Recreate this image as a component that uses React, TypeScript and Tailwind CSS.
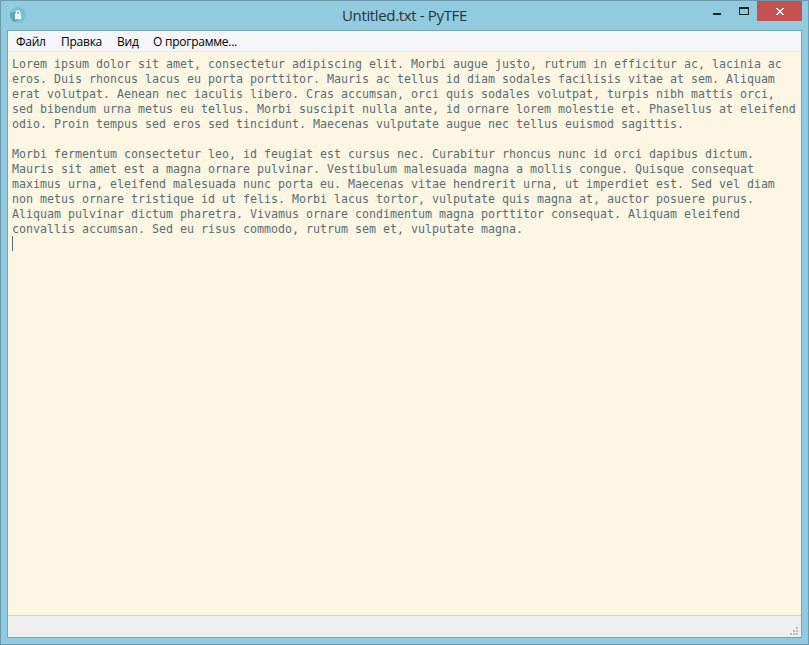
const lines = [
  'Lorem ipsum dolor sit amet, consectetur adipiscing elit. Morbi augue justo, rutrum in efficitur ac, lacinia ac',
  'eros. Duis rhoncus lacus eu porta porttitor. Mauris ac tellus id diam sodales facilisis vitae at sem. Aliquam',
  'erat volutpat. Aenean nec iaculis libero. Cras accumsan, orci quis sodales volutpat, turpis nibh mattis orci,',
  'sed bibendum urna metus eu tellus. Morbi suscipit nulla ante, id ornare lorem molestie et. Phasellus at eleifend',
  'odio. Proin tempus sed eros sed tincidunt. Maecenas vulputate augue nec tellus euismod sagittis.',
  '',
  'Morbi fermentum consectetur leo, id feugiat est cursus nec. Curabitur rhoncus nunc id orci dapibus dictum.',
  'Mauris sit amet est a magna ornare pulvinar. Vestibulum malesuada magna a mollis congue. Quisque consequat',
  'maximus urna, eleifend malesuada nunc porta eu. Maecenas vitae hendrerit urna, ut imperdiet est. Sed vel diam',
  'non metus ornare tristique id ut felis. Morbi lacus tortor, vulputate quis magna at, auctor posuere purus.',
  'Aliquam pulvinar dictum pharetra. Vivamus ornare condimentum magna porttitor consequat. Aliquam eleifend',
  'convallis accumsan. Sed eu risus commodo, rutrum sem et, vulputate magna.',
];

const menus = [
  { label: 'Файл', width: 'w-[45px]' },
  { label: 'Правка', width: 'w-14' },
  { label: 'Вид', width: 'w-9' },
  { label: 'О программе...', width: 'w-24' },
];

function LockIcon() {
  return (
    <svg width="16" height="16" viewBox="0 0 16 16">
      <circle cx="8" cy="8" r="8" fill="#74c2d6" />
      <path d="M0.5 5.5A8 8 0 0 0 4 14.9L10 12 6 5Z" fill="#62a3b2" />
      <rect x="5" y="7" width="6" height="5.2" fill="#fff" />
      <path d="M6.2 7.5V5.7a1.8 1.8 0 0 1 3.6 0v2" fill="none" stroke="#fff" strokeWidth="1.3" />
      <rect x="7.5" y="8.5" width="1" height="2" fill="#a8cbd2" />
    </svg>
  );
}

function TitleBar() {
  return (
    <header className="flex h-[29px] shrink-0 items-start">
      <div className="flex w-[334px] pl-[9px] pt-1.5">
        <LockIcon />
      </div>
      <h1 className="flex-1 whitespace-nowrap pl-[7px] pt-[3px] font-['Open_Sans','Noto_Sans',sans-serif] text-[15px] leading-[22px] tracking-[-0.35px] text-[#26353b]">
        Untitled.txt - PyTFE
      </h1>
      <svg width="52" height="20" viewBox="0 0 52 20" shapeRendering="crispEdges">
        <path d="M8 12h8v2H8z" fill="#222" />
        <path d="M34 6h10v8H34zM35 8v5h8V8z" fill="#222" fillRule="evenodd" />
      </svg>
      <div className="mr-1.5 flex h-5 w-[45px] bg-[#c75050]">
        <svg width="45" height="20" viewBox="0 0 45 20" shapeRendering="crispEdges">
          <path d="M19 7h2v1h1v1h2v-1h1v-1h2v1h-1v1h-1v1h-1v1h1v1h1v1h1v1h-2v-1h-1v-1h-2v1h-1v1h-2v-1h1v-1h1v-1h1v-1h-1v-1h-1v-1h-1z" fill="#fff" />
        </svg>
      </div>
    </header>
  );
}

export default function App() {
  return (
    <div className="flex h-[645px] w-[809px] flex-col overflow-hidden border border-[#6b9bad] bg-[#92cadf]">
      <TitleBar />
      <main className="mx-1.5 mb-1.5 flex min-h-0 flex-1 flex-col border border-[#76a8ba]">
        <nav className="flex h-5 shrink-0 bg-[#f4f6f9] pl-2 font-['Open_Sans','Noto_Sans',sans-serif] text-[12px] leading-[21px] tracking-[-0.25px] text-black">
          {menus.map((m) => (
            <span key={m.label} className={`${m.width} whitespace-nowrap`}>
              {m.label}
            </span>
          ))}
        </nav>
        <section className="flex-1 border-t border-[#ece9e2] bg-[#fdf6e3] pl-1 pt-[5px] font-['DejaVu_Sans_Mono',monospace] text-[11.63px] leading-[15px] text-[#586e75]">
          {lines.map((line, i) => (
            <p key={i} className="h-[15px] whitespace-pre">
              {line}
            </p>
          ))}
          <div className="-mt-px h-[15px] w-px bg-[#586e75]" />
        </section>
        <footer className="flex h-[22px] shrink-0 items-end justify-end border-t border-[#d0d1d1] bg-[#efefef] pb-0.5 pr-[3px]">
          <svg width="8" height="8" viewBox="0 0 8 8" shapeRendering="crispEdges">
            <path d="M6 0h2v2H6zM3 3h2v2H3zM6 3h2v2H6zM0 6h2v2H0zM3 6h2v2H3zM6 6h2v2H6z" fill="#bcbcbc" />
          </svg>
        </footer>
      </main>
    </div>
  );
}
